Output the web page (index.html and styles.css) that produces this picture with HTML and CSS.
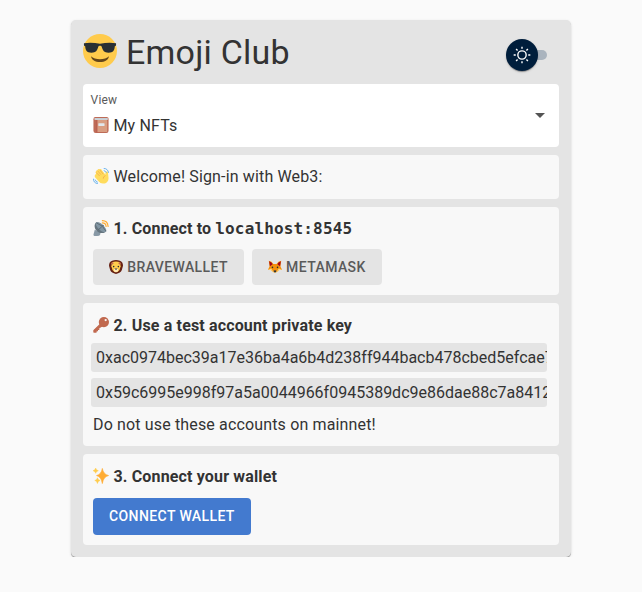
FILE: index.html
```html
<!DOCTYPE html>
<html lang="en">
<head>
<meta charset="utf-8">
<title>Emoji Club</title>
<link rel="stylesheet" href="styles.css">
</head>
<body>
<main class="card">
  <header class="header">
    <svg class="logo" viewBox="0 0 36 36"><circle cx="18" cy="18" r="18" fill="#ffcb4c"/><path d="M8.500 23.500c4 4.300 15 4.300 19 0c-.5 4-4.500 6.200-9.500 6.200s-9-2.200-9.500-6.200z" fill="#65471b"/><path d="M1 9.800c5-1 11-.8 17 .6c6-1.400 12-1.600 17-.6v2.500l-1.300.8c-.4 4.500-1.500 6.700-6.700 6.700c-4.700 0-6-2.300-7.200-6.300c-.4-1.300-3.200-1.300-3.600 0c-1.200 4-2.500 6.300-7.200 6.300c-5.200 0-6.300-2.200-6.700-6.700l-1.300-.8z" fill="#292f33"/></svg>
    <h1 class="title">Emoji Club</h1>
    <div class="switch">
      <span class="track"></span>
      <span class="thumb"><svg viewBox="0 0 20 20"><path fill="#fff" d="M9.305 1.667V3.750h1.389V1.667h-1.390zm-4.707 1.950l-.982.982L5.090 6.072l.982-.982-1.473-1.473zm10.802 0L13.927 5.090l.982.982 1.473-1.473-.982-.982zM10 5.139a4.872 4.872 0 0 0-4.862 4.860A4.872 4.872 0 0 0 10 14.862 4.872 4.872 0 0 0 14.860 10 4.872 4.872 0 0 0 10 5.139zm0 1.389A3.462 3.462 0 0 1 13.471 10a3.462 3.462 0 0 1-3.473 3.472A3.462 3.462 0 0 1 6.527 10 3.462 3.462 0 0 1 10 6.528zM1.665 9.305v1.390h2.083v-1.390H1.666zm14.583 0v1.390h2.084v-1.390h-2.084zM5.090 13.928L3.616 15.400l.982.982 1.473-1.473-.982-.982zm9.820 0l-.982.982 1.473 1.473.982-.982-1.473-1.473zM9.305 16.250v2.083h1.389V16.250h-1.390z"/></svg></span>
    </div>
  </header>

  <div class="stack">
    <div class="select">
      <div class="label">View</div>
      <div class="line value">
        <svg class="emoji" viewBox="0 0 36 36"><path d="M5 0h26q4 0 4 4v27q0 5-5 5H6q-5 0-5-5V5q0-5 4-5z" fill="#be6b57"/><path d="M5 2h28v5H6q-3 0-3-2.500T5 2z" fill="#d8dde2"/><path d="M5 3.500h27M5 5h27" stroke="#aab8c2" stroke-width=".8"/><path d="M10 7h20q2 0 2 2v23q0 2-2 2H10z" fill="#d99e82"/><path d="M8 7h1.500v28H8z" fill="#a0041e" opacity=".2"/><rect x="12" y="14" width="14" height="6" rx="1" fill="#e1e8ed"/></svg>
        My NFTs
      </div>
      <svg class="arrow" viewBox="0 0 24 24"><path d="M7 10l5 5 5-5z"/></svg>
    </div>

    <section class="paper">
      <div class="line">
        <svg class="emoji" viewBox="0 0 36 36"><path d="M4 17q0-3 3-3l-1-5q0-4 4-4q1-4 5-2q3-2 5 2l8 10v-4q1-4 4-3q2 0 2 5l1 10c0 7-5 12-11 12q-7 1-12-6L4 20z" fill="#ffdc5d"/><path d="M15 18L7 10M18 15L10 6M23 14L15 4" stroke="#ef9645" stroke-width="1.300" fill="none"/><path d="M23 24q0-5 5-7" stroke="#ef9645" stroke-width="1.400" fill="none"/><path d="M25 1q8 0 10 9M25 6q4 1 5 4M1 25q0 9 9 10M5 27q1 4 5 5" stroke="#5dadec" stroke-width="2" stroke-linecap="round" fill="none"/></svg>
        Welcome! Sign-in with Web3:
      </div>
    </section>

    <section class="paper">
      <div class="line bold">
        <svg class="emoji" viewBox="0 0 36 36"><path d="M4 22l13 6-1 5q-1 3-7 3H3q-2-1-2-3z" fill="#8899a6"/><path d="M6 6C-1 15 8 32 24 29q5-1 5-4z" fill="#66757f"/><ellipse cx="18" cy="16" rx="15.500" ry="6.500" transform="rotate(43 18 16)" fill="#8296a3"/><path d="M7 6l14 8 8 11M20 15L12 22" stroke="#55636c" stroke-width="1.800" fill="none"/><circle cx="22" cy="13" r="2.500" fill="#66757f"/><path d="M21 1.500q12 0 13 13M21 6.500q8 0 8.500 8" stroke="#ffac33" stroke-width="2.600" fill="none" stroke-linecap="round"/></svg>
        1. Connect to <code>localhost:8545</code>
      </div>
      <div class="buttons">
        <button class="btn"><svg class="emoji small" viewBox="0 0 36 36"><path d="M8 2q10-4 20 0q8 3 8 13l-3 11q-3 8-15 10Q6 34 3 26L0 15Q0 5 8 2z" fill="#662113"/><path d="M8 6q10-4 20 0l2 10-3 10-5 5h-8l-5-5-3-10z" fill="#ffcc4d"/><path d="M5 8l5-3 2 4-5 4zM31 8l-5-3-2 4 5 4z" fill="#c1694f"/><path d="M13 23l5-2 5 2 1 5-6 4-6-4z" fill="#ffe8b6"/><circle cx="12" cy="17" r="2" fill="#292f33"/><circle cx="24" cy="17" r="2" fill="#292f33"/><path d="M14 22h8l-4 4z" fill="#292f33"/></svg>BraveWallet</button>
        <button class="btn"><svg class="emoji small" viewBox="0 0 36 36"><path d="M2 2q8 1 12 8h8q4-7 12-8l-2 14 4 9-7 1q-4 5-11 7-7-2-11-7l-7-1 4-9z" fill="#f4900c"/><path d="M3 3q7 2 9 8l-7 5zM33 3q-7 2-9 8l7 5z" fill="#a0041e"/><path d="M0 25l8-3 6 8q4-3 8 0l6-8 8 3-7 1q-4 5-11 7-7-2-11-7z" fill="#ffd983"/><circle cx="11.500" cy="19" r="2" fill="#292f33"/><circle cx="24.500" cy="19" r="2" fill="#292f33"/><path d="M14 28q4-3 8 0l-4 5z" fill="#292f33"/></svg>MetaMask</button>
      </div>
    </section>

    <section class="paper">
      <div class="line bold head">
        <svg class="emoji" viewBox="0 0 36 36"><path d="M19 14L2 30v4h5v-3h3v-3h3v-3l8-5z" fill="#c1694f" stroke="#c1694f" stroke-width="2.500" stroke-linejoin="round"/><circle cx="24.500" cy="11.500" r="11.500" fill="#c1694f"/><circle cx="28.500" cy="7" r="2.600" fill="#f8f8f8"/></svg>
        2. Use a test account private key
      </div>
      <div class="key">0xac0974bec39a17e36ba4a6b4d238ff944bacb478cbed5efcae784d7bf4f2ff80</div>
      <div class="key">0x59c6995e998f97a5a0044966f0945389dc9e86dae88c7a8412f4603b6b78690d</div>
      <div class="line note">Do not use these accounts on mainnet!</div>
    </section>

    <section class="paper">
      <div class="line bold head">
        <svg class="emoji" viewBox="0 0 36 36"><path d="M21 1q2 13 14 16q-12 3-14 18Q19 20 8 17Q19 14 21 1z" fill="#ffac33" stroke="#ffac33" stroke-width="1.500"/><path d="M6 0q1 5 6 6-5 1-6 6-1-5-6-6 5-1 6-6zM10 22q1 5 6 6-5 1-6 7-1-6-6-7 5-1 6-6z" fill="#ffcc4d" stroke="#ffcc4d"/></svg>
        3. Connect your wallet
      </div>
      <button class="btn primary">Connect Wallet</button>
    </section>
  </div>
</main>
</body>
</html>
```
FILE: styles.css
```css
* { box-sizing: border-box; }
body {
  margin: 0;
  padding-top: 20px;
  background: #fafafa;
  color: #333;
  font: 16px/24px Roboto, sans-serif;
  letter-spacing: 0.15px;
}
.card {
  width: 500px;
  margin: 0 auto;
  padding: 0 12px 12px;
  background: #e4e4e4;
  border-radius: 5px;
  box-shadow: 0 1px 0 rgba(0,0,0,.22), 0 1px 1px rgba(0,0,0,.12), 0 1px 3px rgba(0,0,0,.12);
}
.header { display: flex; height: 64px; align-items: center; }
.logo { width: 34px; height: 34px; flex: none; margin-top: -2px; }
.title { margin: 0 0 0 9px; font-size: 34px; line-height: 42px; font-weight: 400; letter-spacing: 0.22px; }
.switch { position: relative; width: 62px; height: 34px; margin-left: auto; margin-top: 6px; }
.track { position: absolute; left: 19px; top: 12px; width: 31px; height: 10px; border-radius: 5px; background: #aab4be; }
.thumb {
  position: absolute; left: 9px; top: 1px; width: 32px; height: 32px;
  display: flex; align-items: center; justify-content: center;
  border-radius: 50%; background: #001e3c;
  box-shadow: 0 2px 1px -1px rgba(0,0,0,.2), 0 1px 1px rgba(0,0,0,.14), 0 1px 3px rgba(0,0,0,.12);
}
.thumb svg { width: 20px; height: 20px; }
.stack { display: flex; flex-direction: column; gap: 8px; }
.select {
  position: relative; height: 63px; padding: 8px 8px 0;
  background: #fff; border-radius: 4px;
}
.label { margin-left: -0.4px; font-size: 12px; line-height: 16px; color: #5a5a5a; }
.value { margin-top: 6px; }
.arrow { position: absolute; right: 7px; top: 19px; width: 24px; height: 24px; fill: #545454; }
.paper { padding: 10px 12px 10px 8px; background: #f8f8f8; border-radius: 4px; }
.line { display: flex; align-items: center; padding-left: 2px; white-space: nowrap; }
.emoji { width: 16px; height: 16px; flex: none; margin: 0 4.500px 2px 0; }
.bold { font-weight: 700; }
.head { padding-top: 1px; }
code { margin-left: 4px; font: 700 16px/24px "DejaVu Sans Mono", monospace; }
.buttons { display: flex; gap: 8px; margin: 8px 0 0 2px; }
.btn {
  display: inline-flex; align-items: center; height: 36px; padding: 0 16px;
  border: 0; border-radius: 4px; background: #e4e4e4; color: #5a5a5a;
  font: 500 14px/24px Roboto, sans-serif; letter-spacing: 0.4px; text-transform: uppercase;
}
.small { width: 14px; height: 14px; margin: 0 4.200px 0 0; }
.key {
  height: 29px; margin-bottom: 6px; padding: 3px 5px 0;
  overflow: hidden; white-space: nowrap; line-height: 24px; letter-spacing: 0;
  background: #e4e4e4; border-radius: 3px;
}
.bold + .key { margin-top: 5px; }
.note { margin-bottom: -1px; }
.primary { display: flex; height: 37px; margin: 9px 0 0 2px; padding-bottom: 1px; background: #437acf; color: #fff; }
```
